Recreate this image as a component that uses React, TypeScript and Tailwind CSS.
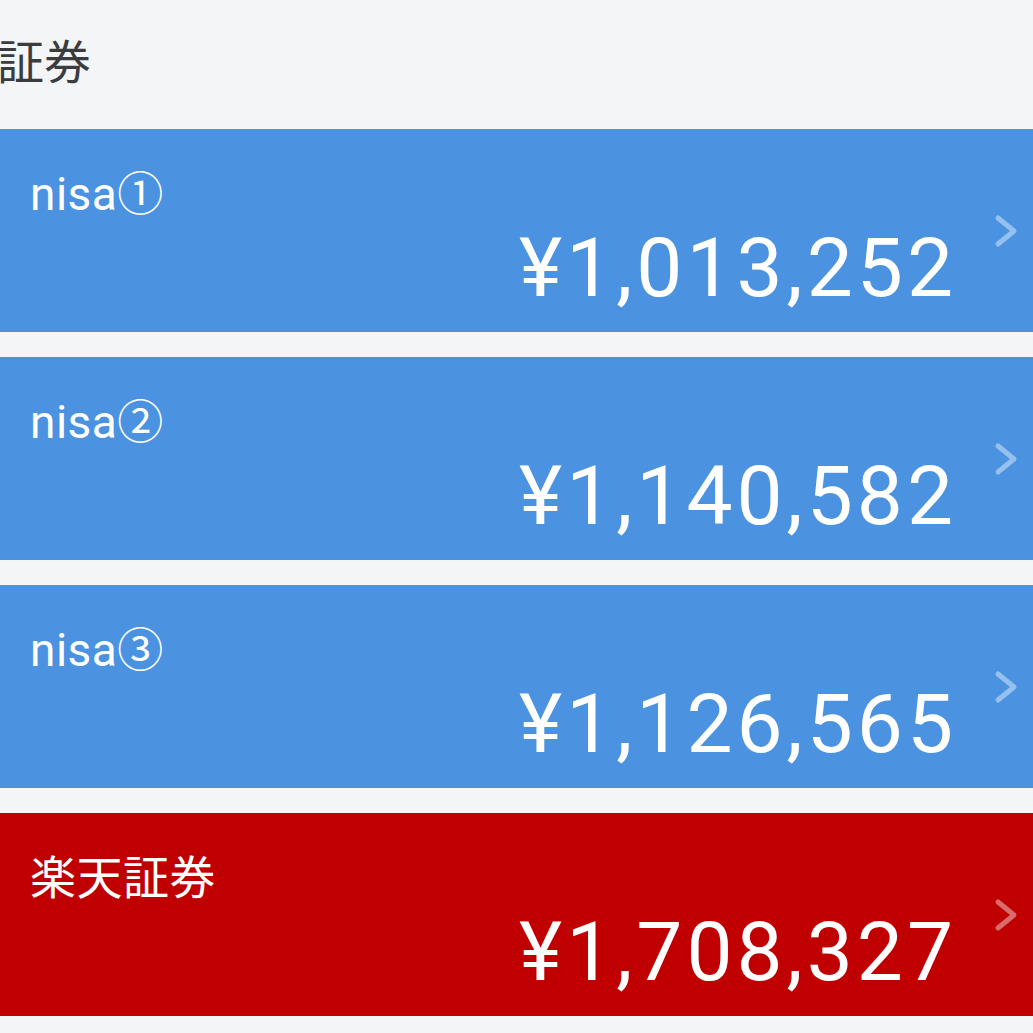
type Account = {
  name: string;
  amount: number;
  tone: "blue" | "red";
};

const accounts: Account[] = [
  { name: "nisa①", amount: 1013252, tone: "blue" },
  { name: "nisa②", amount: 1140582, tone: "blue" },
  { name: "nisa③", amount: 1126565, tone: "blue" },
  { name: "楽天証券", amount: 1708327, tone: "red" },
];

const cjk = { fontFamily: '"Noto Sans CJK JP", "Noto Sans", sans-serif' };
const latin = { fontFamily: 'Roboto, "Noto Sans CJK JP", sans-serif' };

// thick rounded chevron, drawn to match the reference
const Chevron = () => (
  <svg width="26" height="34" viewBox="0 0 26 34" fill="none" className="shrink-0">
    <path
      d="M5 4 L21 17 L5 30"
      stroke="white"
      strokeOpacity="0.42"
      strokeWidth="5"
      strokeLinecap="round"
      strokeLinejoin="round"
    />
  </svg>
);

const AccountCard = ({ account }: { account: Account }) => {
  const bg = account.tone === "red" ? "bg-[#c00000]" : "bg-[#4b93e0]";
  return (
    <div className={`${bg} h-[203px] flex pl-[30px] pr-[14px] text-white`}>
      <div className="flex-1 flex flex-col pt-[42px]">
        <div className="text-[46px] leading-none tracking-[0.5px]" style={latin}>
          {account.name}
        </div>
        <div
          className="text-[82px] leading-none text-right mt-[10px] tracking-[4px] mr-[-4px]"
          style={latin}
        >
          ¥{account.amount.toLocaleString("en-US")}
        </div>
      </div>
      <div className="self-center ml-[40px]">
        <Chevron />
      </div>
    </div>
  );
};

export default function App() {
  return (
    <div className="w-[1033px] h-[1033px] overflow-hidden bg-[#f4f5f7]" style={cjk}>
      {/* Section header */}
      <div className="h-[129px] pt-[35px]">
        <div className="text-[47px] leading-none text-[#3b3c3e] ml-[-3px]">証券</div>
      </div>

      {/* Account list */}
      <div className="flex flex-col gap-[25px]">
        {accounts.map((a) => (
          <AccountCard key={a.name} account={a} />
        ))}
      </div>
    </div>
  );
}
